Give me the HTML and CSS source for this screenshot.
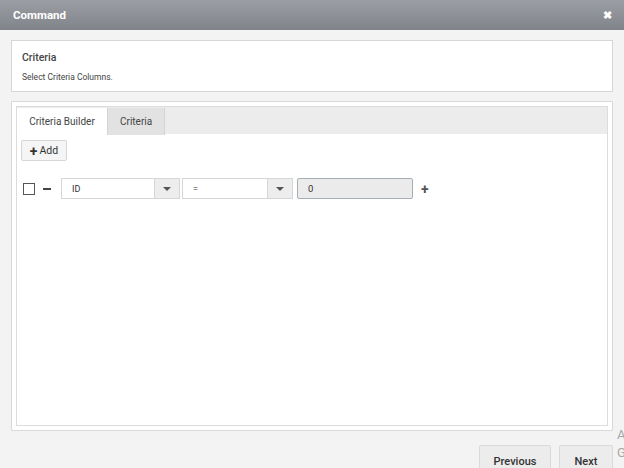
FILE: index.html
```html
<!DOCTYPE html>
<html lang="en">
<head>
  <meta charset="UTF-8">
  <title>Command</title>
  <link rel="stylesheet" href="styles.css">
</head>
<body>

  <div class="dialog-header">
    <span class="dialog-title">Command</span>
    <span class="dialog-close">&#10006;</span>
  </div>

  <div class="dialog-body">
    <div class="info-panel">
      <div class="info-title">Criteria</div>
      <div class="info-text">Select Criteria Columns.</div>
    </div>

    <div class="tab-box">
      <div class="tab-strip">
        <div class="tab active">Criteria Builder</div>
        <div class="tab">Criteria</div>
      </div>
      <div class="tab-body">
        <button class="add-btn"><span class="add-plus">+</span>Add</button>

        <div class="rule-row">
          <span class="rule-check"></span>
          <span class="rule-minus"></span>
          <div class="select select-field">
            <span class="select-value">ID</span>
            <span class="select-arrow"></span>
          </div>
          <div class="select select-op">
            <span class="select-value">=</span>
            <span class="select-arrow"></span>
          </div>
          <div class="rule-input">0</div>
          <span class="rule-plus">+</span>
        </div>
      </div>
    </div>

    <div class="footer">
      <button class="nav-btn prev-btn">Previous</button>
      <button class="nav-btn next-btn">Next</button>
    </div>
  </div>

  <div class="watermark">A<br>G</div>

</body>
</html>
```

FILE: styles.css
```css
* {
  box-sizing: border-box;
  margin: 0;
  padding: 0;
}

body {
  font-family: Roboto, "Liberation Sans", sans-serif;
  background-color: #f3f3f3;
  color: #333;
  width: 624px;
  height: 468px;
  overflow: hidden;
  position: relative;
}

.dialog-header {
  height: 30px;
  background: linear-gradient(#9b9ea3, #80848a);
  display: flex;
  justify-content: space-between;
  align-items: center;
  padding: 0 12px 0 13px;
  color: white;
}

.dialog-title {
  font-size: 11.5px;
  font-weight: bold;
}

.dialog-close {
  font-size: 11px;
  font-weight: bold;
}

.dialog-body {
  padding: 10px 11px 0 11px;
}

.info-panel {
  background: white;
  border: 1px solid #d6d6d6;
  height: 52px;
  padding: 10px 10px;
}

.info-title {
  font-size: 10.5px;
  font-weight: 500;
  color: #444;
}

.info-text {
  font-size: 8.5px;
  color: #444;
  margin-top: 8px;
}

.tab-box {
  margin-top: 9px;
  height: 330px;
  background: white;
  border: 1px solid #d9d9d9;
  padding: 4px;
}

.tab-strip {
  height: 28px;
  background: #ececec;
  border: 1px solid #dcdcdc;
  border-bottom: none;
  display: flex;
  padding: 1px 0 0 0;
}

.tab {
  font-size: 10px;
  color: #444;
  height: 27px;
  display: flex;
  align-items: center;
  padding: 0 12px;
  background: #e2e2e2;
  border-right: 1px solid #d4d4d4;
}

.tab.active {
  background: white;
  width: 91px;
  justify-content: center;
  padding: 0;
}

.tab-body {
  height: 292px;
  border: 1px solid #dcdcdc;
  border-top: none;
  padding: 6px 4px;
}

.add-btn {
  font-family: inherit;
  font-size: 10.5px;
  color: #333;
  background: #f5f5f5;
  border: 1px solid #d6d6d6;
  border-radius: 2px;
  width: 46px;
  height: 21px;
  display: flex;
  align-items: center;
  justify-content: center;
}

.add-plus {
  font-size: 14px;
  font-weight: bold;
  margin-right: 2px;
  line-height: 1;
}

.rule-row {
  margin-top: 17px;
  display: flex;
  align-items: center;
  height: 21px;
}

.rule-check {
  width: 12px;
  height: 12px;
  border: 1px solid #555;
  margin-left: 2px;
}

.rule-minus {
  width: 8px;
  height: 2px;
  background: #444;
  margin-left: 8px;
  margin-right: 10px;
}

.select {
  height: 21px;
  border: 1px solid #d6d6d6;
  display: flex;
  background: white;
}

.select-field {
  width: 119px;
  margin-right: 2px;
}

.select-op {
  width: 111px;
  margin-right: 4px;
}

.select-value {
  flex: 1;
  font-size: 9px;
  color: #333;
  padding-left: 10px;
  display: flex;
  align-items: center;
}

.select-arrow {
  width: 25px;
  background: #ededed;
  border-left: 1px solid #d6d6d6;
  position: relative;
}

.select-arrow::after {
  content: "";
  position: absolute;
  left: 8px;
  top: 8px;
  border-left: 4px solid transparent;
  border-right: 4px solid transparent;
  border-top: 4px solid #555;
}

.rule-input {
  width: 116px;
  height: 21px;
  background: #ebebeb;
  border: 1px solid #a5adb5;
  border-radius: 2px;
  font-size: 9.5px;
  color: #333;
  padding-left: 10px;
  display: flex;
  align-items: center;
}

.rule-plus {
  font-size: 14px;
  font-weight: bold;
  color: #555;
  margin-left: 8px;
}

.footer {
  display: flex;
  justify-content: flex-end;
  gap: 8px;
  margin-top: 14px;
}

.nav-btn {
  font-family: inherit;
  font-size: 11px;
  font-weight: 500;
  color: #333;
  background: #ececec;
  border: 1px solid #dadada;
  border-radius: 2px;
  height: 28px;
  padding-top: 4px;
}

.prev-btn {
  width: 72px;
}

.next-btn {
  width: 54px;
}

.watermark {
  position: absolute;
  left: 617px;
  top: 426px;
  font-size: 13px;
  line-height: 18px;
  color: #a8a8a8;
}
```
